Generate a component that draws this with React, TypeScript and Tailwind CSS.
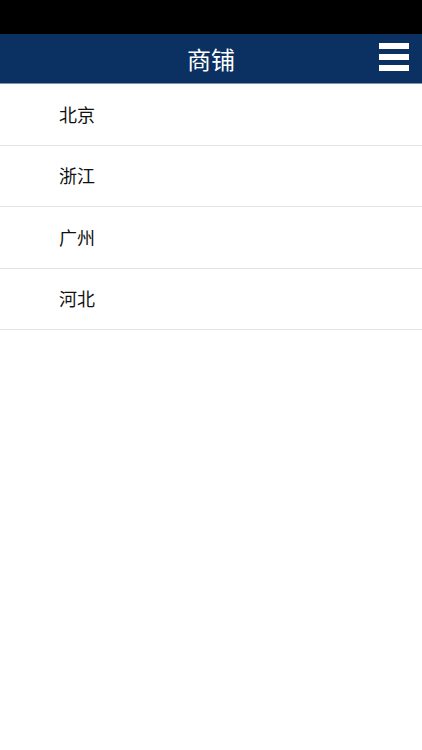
import React from "react";

const cities = ["北京", "浙江", "广州", "河北"];

export default function App() {
  return (
    <div
      className="w-[422px] h-[750px] bg-white flex flex-col"
      style={{ fontFamily: '"Noto Sans CJK SC", "Noto Sans", sans-serif' }}
    >
      {/* status bar */}
      <div className="h-[34px] bg-black shrink-0" />

      {/* header */}
      <div className="relative h-[50px] shrink-0 bg-[#0b3163] border-b border-[#7f93ad] flex items-center justify-center">
        <h1 className="text-[24px] leading-none text-white">商铺</h1>
        <button className="absolute right-[13px] top-[9px] w-[30px] flex flex-col gap-[5px]">
          <span className="block h-[6px] bg-white" />
          <span className="block h-[6px] bg-white" />
          <span className="block h-[6px] bg-white" />
        </button>
      </div>

      {/* list */}
      <ul className="flex flex-col">
        {cities.map((c) => (
          <li
            key={c}
            className="h-[61.5px] flex items-center pl-[59px] border-b border-[#e3e3e3] text-[18px] text-[#111]"
          >
            {c}
          </li>
        ))}
      </ul>
    </div>
  );
}
